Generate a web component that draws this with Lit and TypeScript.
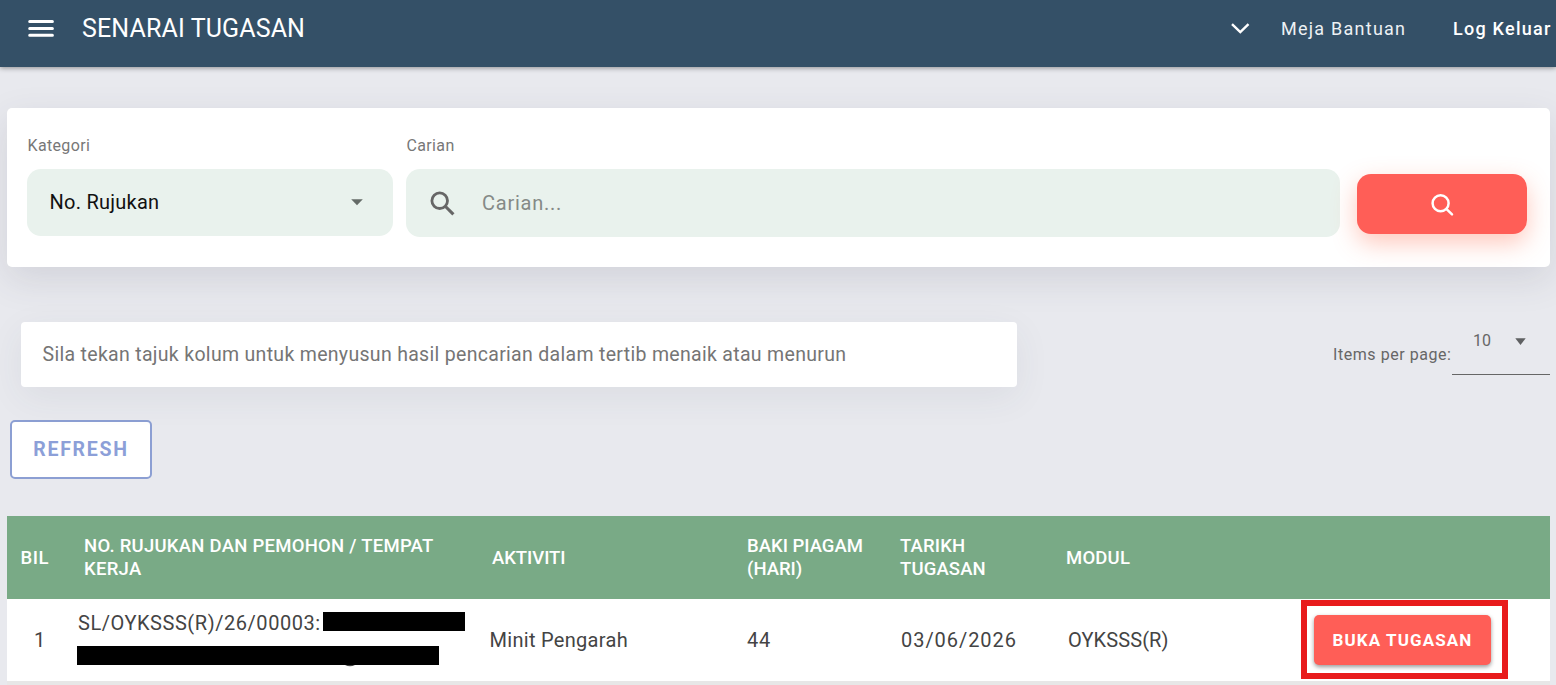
import { LitElement, html, css } from "lit";
import { customElement, property } from "lit/decorators.js";

@customElement("top-bar")
class TopBar extends LitElement {
  static styles = css`
    :host { display: block; position: relative; z-index: 1; }
    .bar { height: 67px; box-sizing: border-box; background: #345067; color: #fff; display: flex; align-items: flex-start;
      padding-left: 28px; box-shadow: 0 1px 5px rgba(0,0,0,.4); white-space: nowrap; }
    .menu { width: 26px; height: 18px; margin-top: 20px; }
    .title { margin: 14px 0 0 28px; font-size: 25px; line-height: 30px; letter-spacing: .13px; font-weight: 400; flex: 1; }
    .chev { width: 20px; height: 14px; margin: 22px 31px 0 0; }
    .link { font-size: 18px; line-height: 22px; margin-top: 18px; letter-spacing: 1.25px; color: #edf1f4; width: 172px; }
    .out { font-size: 18px; line-height: 22px; margin-top: 18px; letter-spacing: 1.25px; font-weight: 500; width: 103px; }
  `;
  render() {
    return html`<header class="bar">
      <svg class="menu" viewBox="0 0 26 18" stroke="#fff" stroke-width="3" stroke-linecap="round"><path d="M1.7 1.5H24.4M1.7 8.5H24.4M1.7 15.3H24.4" /></svg>
      <div class="title">SENARAI TUGASAN</div>
      <svg class="chev" viewBox="0 0 20 14" fill="none" stroke="#fff" stroke-width="2.4"><path d="M2 2.2L10.3 10.2L18.5 2.2" /></svg>
      <div class="link">Meja Bantuan</div>
      <div class="out">Log Keluar</div>
    </header>`;
  }
}

@customElement("search-panel")
class SearchPanel extends LitElement {
  static styles = css`
    :host { display: block; }
    .card { height: 159px; box-sizing: border-box; background: #fff; border-radius: 5px; padding: 28px 23px 0 20px;
      display: grid; grid-template-columns: 366px 934px 170px; column-gap: 13px; box-shadow: 0 12px 36px rgba(60,65,85,.13); }
    .label { font-size: 16px; line-height: 20px; letter-spacing: .35px; color: #777; padding-left: .5px; margin-bottom: 13px; }
    .box { background: #e9f2ed; border-radius: 14px; display: flex; align-items: center; box-sizing: border-box; }
    .select { height: 67px; padding: 0 29px 1px 22.5px; justify-content: space-between; font-size: 20px; color: #111; letter-spacing: .25px; }
    .input { height: 68px; padding-left: 24px; font-size: 20px; color: #858a87; letter-spacing: .75px; }
    .caret { width: 14px; height: 7px; }
    .lens { width: 25px; height: 25px; margin-right: 27px; }
    .btn { margin: 38px 0 0 4px; width: 170px; height: 60px; border: 0; border-radius: 14px; background: #ff5e57; padding: 1px 0 0 0;
      display: flex; align-items: center; justify-content: center; box-shadow: 0 9px 24px rgba(255,94,60,.34); }
    .go { width: 24px; height: 24px; }
  `;
  render() {
    return html`<section class="card">
      <div>
        <div class="label">Kategori</div>
        <div class="box select"><span>No. Rujukan</span>
          <svg class="caret" viewBox="0 0 14 7"><path d="M1.2 .3H12.8L7 6.3Z" fill="#646b67" /></svg></div>
      </div>
      <div>
        <div class="label">Carian</div>
        <div class="box input">
          <svg class="lens" viewBox="0 0 25 25" fill="none" stroke="#666"><circle cx="9.7" cy="9.7" r="7.8" stroke-width="2.8" /><path d="M15.5 15.5L23.4 23.4" stroke-width="3.1" /></svg>
          <span>Carian...</span></div>
      </div>
      <button class="btn" aria-label="Carian">
        <svg class="go" viewBox="0 0 24 24" fill="none" stroke="#fff" stroke-width="2.5" stroke-linecap="round"><circle cx="10.6" cy="10.3" r="8" /><path d="M16.6 16.2L22 21.4" /></svg>
      </button>
    </section>`;
  }
}

@customElement("task-table")
class TaskTable extends LitElement {
  @property({ attribute: false }) rows: { no: number; ref: string; act: string; days: number; date: string; mod: string }[] = [];
  static styles = css`
    :host { display: block; }
    .row { display: grid; grid-template-columns: 77px 408px 255px 153px 166px 235px 1fr; align-items: center; white-space: nowrap; }
    .head { height: 83px; box-sizing: border-box; background: #79aa86; color: #fff; font-size: 18.5px; font-weight: 500; line-height: 23px; letter-spacing: 0; }
    .body { height: 82px; box-sizing: border-box; background: #fff; color: #444; font-size: 20px; line-height: 24px; letter-spacing: .3px; }
    .foot { height: 4px; background: #e7e7e7; }
    .h1 { padding: 1px 0 0 13.5px; letter-spacing: .5px; }
    .h2 { letter-spacing: .26px; }
    .h3 { letter-spacing: -.05px; padding-top: 1px; }
    .h5 { letter-spacing: .15px; }
    .h6 { letter-spacing: .2px; padding-top: 1px; }
    .c1 { padding-left: 27px; }
    .c2 { align-self: start; padding-top: 12px; margin-left: -6px; letter-spacing: .55px; }
    .c3 { margin-left: -2.5px; letter-spacing: .3px; }
    .c4 { letter-spacing: .7px; }
    .c5 { padding-left: 1px; letter-spacing: .95px; }
    .c6 { padding-left: 2px; letter-spacing: .1px; }
    .line { display: flex; align-items: flex-start; height: 24px; }
    .mask { background: #000; height: 19px; }
    .m1 { width: 142px; margin: 1px 0 0 3px; }
    .m2 { width: 362px; margin: 11px 0 0 -1px; }
    .ref { width: 242px; line-height: 25px; }
    .tail { display: block; width: 10px; height: 2px; margin-left: 267px; }
    .frame { width: 207px; height: 79px; box-sizing: border-box; border: 6px solid #e81b1c; display: flex; align-items: center; justify-content: center;
      padding: 1px 4px 0 0; align-self: start; margin-top: 1px; }
    .open { width: 177px; height: 50px; border: 0; border-radius: 5px; background: #ff5e57; color: #fff; font: 700 17px/20px Roboto, sans-serif;
      letter-spacing: 1.1px; padding: 0; box-shadow: 0 2px 4px rgba(0,0,0,.4); white-space: nowrap; }
  `;
  render() {
    return html`
      <div class="row head">
        <div class="h1">BIL</div>
        <div class="h2">NO. RUJUKAN DAN PEMOHON / TEMPAT<br />KERJA</div>
        <div class="h3">AKTIVITI</div>
        <div class="h4">BAKI PIAGAM<br />(HARI)</div>
        <div class="h5">TARIKH<br />TUGASAN</div>
        <div class="h6">MODUL</div>
      </div>
      ${this.rows.map((r) => html`<div class="row body">
        <div class="c1">${r.no}</div>
        <div class="c2">
          <div class="line"><span class="ref">${r.ref}:</span><span class="mask m1"></span></div>
          <div class="mask m2"></div>
          <svg class="tail" viewBox="0 0 10 2"><path d="M0 0H10Q5 2.4 0 0Z" fill="#444" /></svg>
        </div>
        <div class="c3">${r.act}</div>
        <div class="c4">${r.days}</div>
        <div class="c5">${r.date}</div>
        <div class="c6">${r.mod}</div>
        <div class="frame"><button class="open">BUKA TUGASAN</button></div>
      </div>`)}
      <div class="foot"></div>`;
  }
}

@customElement("app-root")
class AppRoot extends LitElement {
  static styles = css`
    :host { display: block; width: 100%; height: 685px; overflow: hidden; background: #e8e9ee; font-family: Roboto, sans-serif; }
    .main { padding: 41px 6px 0 7px; }
    .tools { display: flex; justify-content: space-between; align-items: flex-start; padding: 55px 0 0 14px; height: 98px; }
    .hint { width: 996px; height: 65px; box-sizing: border-box; background: #fff; border-radius: 4px; padding: 21px 21.5px; font-size: 19.5px; line-height: 24px;
      color: #757575; letter-spacing: .31px; white-space: nowrap; box-shadow: 0 10px 36px rgba(60,65,85,.07); }
    .pager { display: flex; font-size: 16px; line-height: 20px; color: #666; white-space: nowrap; }
    .plabel { width: 119px; padding-top: 23px; letter-spacing: .55px; }
    .psel { width: 98px; height: 53px; box-sizing: border-box; border-bottom: 1px solid #666; padding: 9px 24px 0 21px; display: flex; justify-content: space-between; }
    .caret { width: 11px; height: 7px; margin-top: 7px; }
    .refresh { display: block; margin: 0 0 37px 3px; width: 142px; height: 59px; box-sizing: border-box; border: 2px solid #8c9fd3; border-radius: 5px; background: #fff; color: #8c9fd8;
      font: 700 19.5px/24px Roboto, sans-serif; letter-spacing: 1.7px; padding: 0; }
  `;
  rows = [{ no: 1, ref: "SL/OYKSSS(R)/26/00003", act: "Minit Pengarah", days: 44, date: "03/06/2026", mod: "OYKSSS(R)" }];
  render() {
    return html`<top-bar></top-bar>
      <main class="main">
        <search-panel></search-panel>
        <div class="tools">
          <div class="hint">Sila tekan tajuk kolum untuk menyusun hasil pencarian dalam tertib menaik atau menurun</div>
          <div class="pager"><span class="plabel">Items per page:</span>
            <div class="psel"><span>10</span><svg class="caret" viewBox="0 0 11 7"><path d="M.3 .3H10.7L5.5 7Z" fill="#5f6062" /></svg></div></div>
        </div>
        <button class="refresh">REFRESH</button>
        <task-table .rows=${this.rows}></task-table>
      </main>`;
  }
}
